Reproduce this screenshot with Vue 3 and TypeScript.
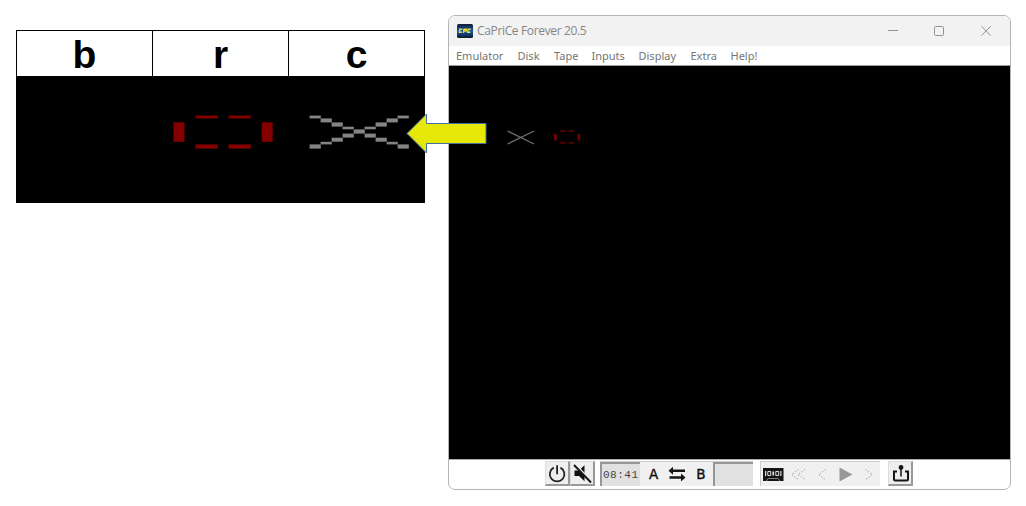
<script setup lang="ts">
const columns: string[] = ['b', 'r', 'c']
const menu: string[] = ['Emulator', 'Disk', 'Tape', 'Inputs', 'Display', 'Extra', 'Help!']

interface Block { x: number; y: number; w: number; h: number }

const redBlocks: Block[] = [
  { x: 157.5, y: 46.3, w: 11, h: 19.5 },
  { x: 245.7, y: 46.3, w: 11, h: 19.5 },
  { x: 179.5, y: 39.6, w: 22.3, h: 2.8 },
  { x: 212.5, y: 39.6, w: 22.3, h: 2.8 },
  { x: 179.5, y: 68.4, w: 22.3, h: 4.2 },
  { x: 212.5, y: 68.4, w: 22.3, h: 4.2 },
]

// Scan-line rows of the cross: distance from the centre column, top and height
const rows: [number, number, number][] = [
  [4, 39.6, 2.8], [3, 42.4, 4], [2, 46.4, 4.2], [1, 50.7, 2.6],
  [0, 53.4, 4.2], [1, 57.6, 4], [2, 61.7, 4], [3, 65.8, 2.6], [4, 68.4, 4.2],
]
const crossBlocks: Block[] = rows.flatMap(([d, y, h]) =>
  (d === 0 ? [0] : [-d, d]).map((n) => ({ x: 337.6 + n * 11, y, w: 11.2, h })),
)
</script>

<template>
  <main class="page">
    <section class="table">
      <div class="heads">
        <div v-for="c in columns" :key="c" class="head">{{ c }}</div>
      </div>
      <svg class="cells" width="409" height="127" viewBox="0 0 409 127">
        <g fill="#840000">
          <rect v-for="(b, i) in redBlocks" :key="i" :x="b.x" :y="b.y" :width="b.w" :height="b.h" />
        </g>
        <g fill="#848484">
          <rect v-for="(b, i) in crossBlocks" :key="i" :x="b.x" :y="b.y" :width="b.w" :height="b.h" />
        </g>
      </svg>
    </section>

    <section class="window">
      <header class="title">
        <svg class="logo" width="16" height="14" viewBox="0 0 16 14">
          <defs>
            <linearGradient id="sky" x1="0" y1="0" x2="0" y2="1">
              <stop offset="0" stop-color="#151c30" />
              <stop offset=".5" stop-color="#1457b8" />
              <stop offset="1" stop-color="#101828" />
            </linearGradient>
          </defs>
          <rect width="16" height="14" rx="1.5" fill="url(#sky)" />
          <path d="M5.400 5.200H2.800L2.300 8.300h2.600M6.400 9 7 5.200h2.400L9.100 7H7M13.800 5.200h-2.600l-.5 3.100h2.700" fill="none" stroke="#e6dc30" stroke-width="1.400" />
        </svg>
        <span class="name">CaPriCe Forever 20.5</span>
        <svg class="controls" width="104" height="12" viewBox="0 0 104 12" fill="none" stroke="#929292">
          <path d="M0 6.500h10" />
          <rect x="46.500" y="2.500" width="9" height="9" rx="1" />
          <path d="m93.500 2.300 9.200 9.200m0-9.200-9.200 9.200" />
        </svg>
      </header>
      <nav class="menu">
        <span v-for="m in menu" :key="m" :class="['item', m.toLowerCase().replace('!', '')]">{{ m }}</span>
      </nav>
      <svg class="screen" width="561" height="393" viewBox="0 0 561 393">
        <path d="m58.500 65 26.500 13M58.500 78 85 65" fill="none" stroke="#707070" stroke-width="1.300" />
        <path d="M105 68h2.700v6.500H105zM128.500 68h2.700v6.500h-2.700zM111 64.500h5.700v1.200H111zM119.500 64.500h5.700v1.200h-5.700zM111 76.200h5.700v1.400H111zM119.500 76.200h5.700v1.400h-5.700z" fill="#780000" />
      </svg>
      <footer class="tools">
        <div class="group">
          <div class="button">
            <svg width="22" height="22" viewBox="0 0 22 22" fill="none" stroke="#222" stroke-width="1.800">
              <path d="M7.800 5.600a7.300 7.300 0 1 0 6.600 0M11.100 3.200v9" />
            </svg>
          </div>
          <div class="button">
            <svg width="22" height="22" viewBox="0 0 22 22">
              <path d="M3.500 8.500H8l5.500-5.200v16L8 14H3.500z" fill="#101010" />
              <path d="m4.200 2.500 16.500 17" stroke="#eee" stroke-width="1.800" />
              <path d="m3 3 17 17.500" stroke="#151515" stroke-width="1.900" />
            </svg>
          </div>
        </div>
        <div class="drives">
          <div class="slot clock">08:41</div>
          <span class="drive">A</span>
          <svg class="swap" width="18" height="16" viewBox="0 0 18 16" fill="#151515">
            <path d="M.500 4.700 5 .700v2.700h12v2.600H5v2.700zM17.500 11.500 13 7.500v2.700H1.500v2.600H13v2.700z" />
          </svg>
          <span class="drive">B</span>
          <div class="slot empty"></div>
        </div>
        <div class="tape-deck">
          <svg width="119" height="24" viewBox="0 0 119 24">
            <path d="M2 6h20.500v13H2z" fill="#151515" />
            <path d="M4 9h1.200v5H4zM19.300 9h1.200v5h-1.200zM11.400 9.500h1.700v4h-1.700z" fill="#ddd" />
            <path d="M6.800 9.500H9.700v4H6.800zM14.800 9.500h2.900v4h-2.900z" fill="none" stroke="#ddd" />
            <path d="m5.500 19 1.700-2.500h10l1.800 2.500" fill="none" stroke="#aaa" stroke-width=".7" />
            <g fill="none" stroke="#b0b0b0" stroke-width="1.200" stroke-dasharray="1.200 1.800">
              <path d="m37.500 7.500-7 5 7 5M44 7.500l-7 5 7 5M64.500 7.500l-7 5 7 5M104.500 7.500l7 5-7 5" />
            </g>
            <path d="M78.500 5.500 91.500 12.500l-13 7z" fill="#979797" />
          </svg>
        </div>
        <div class="button eject">
          <svg width="22" height="22" viewBox="0 0 22 22" fill="none" stroke="#151515">
            <path d="M8 9.500H5V17q0 1.500 1.500 1.500h11q1.500 0 1.500-1.500V9.500h-3" stroke-width="2" />
            <path d="M12 14.500V6" stroke-width="1.500" />
            <circle cx="12" cy="5.500" r="2.400" fill="#151515" stroke="none" />
          </svg>
        </div>
      </footer>
    </section>

    <svg class="arrow" width="82" height="42" viewBox="0 0 82 42">
      <path d="M1 20.500 20.500 1v9.500H80v20H20.500V40z" fill="#e6e908" stroke="#41719c" />
    </svg>
  </main>
</template>

<style>
body {
  background: #fff;
}
</style>

<style scoped>
.page {
  position: relative;
  box-sizing: border-box;
  width: 1026px;
  height: 506px;
  padding: 15px 0 0 16px;
  display: flex;
  align-items: flex-start;
  gap: 23px;
  overflow: hidden;
}
.table {
  width: 409px;
  margin-top: 15px;
  background: #000;
}
.heads {
  box-sizing: border-box;
  height: 46px;
  padding: 1px;
  display: grid;
  grid-template-columns: 135px 135px 135px;
  gap: 1px;
}
.head {
  height: 45px;
  background: #fff;
  text-align: center;
  font: bold 39px/47px "Liberation Sans", Arial, sans-serif;
  color: #000;
}
.cells {
  display: block;
}
.window {
  box-sizing: border-box;
  width: 563px;
  height: 475px;
  border: 1px solid #b5b5b5;
  border-radius: 7px;
  overflow: hidden;
  background: #fff;
  font-family: "Noto Sans", "Open Sans", sans-serif;
}
.title {
  height: 30px;
  display: flex;
  align-items: center;
  background: #f2f2f2;
}
.logo {
  margin-left: 8px;
}
.name {
  margin-left: 4px;
  font: 12px/30px "Open Sans", sans-serif;
  letter-spacing: -0.35px;
  color: #858585;
}
.controls {
  margin: 0 18px 2px auto;
}
.menu {
  box-sizing: border-box;
  height: 20px;
  padding-left: 7px;
  display: flex;
  border-bottom: 1px solid #999;
  font-size: 11px;
  line-height: 19px;
  color: #757575;
}
.item {
  flex: none;
  white-space: nowrap;
}
.emulator { width: 61.5px; }
.disk { width: 36.5px; }
.tape { width: 37.5px; }
.inputs { width: 47px; }
.display { width: 52px; }
.extra { width: 40px; }
.screen {
  display: block;
  background: #000;
}
.tools {
  box-sizing: border-box;
  height: 30px;
  padding: 1px 0 0 96px;
  display: flex;
  align-items: flex-start;
  border-top: 1px solid #aaa;
}
.group {
  display: flex;
}
.button {
  box-sizing: border-box;
  width: 25px;
  height: 25px;
  background: #eee;
  border-right: 2px solid #999;
  border-bottom: 2px solid #999;
  border-top: 1px solid #ddd;
  border-left: 1px solid #ddd;
}
.button svg {
  display: block;
}
.drives {
  box-sizing: border-box;
  width: 153px;
  height: 25px;
  margin-left: 5px;
  display: flex;
  align-items: center;
  background: #f0f0f0;
  border-top: 1px solid #ccc;
}
.slot {
  box-sizing: border-box;
  flex: none;
  width: 40px;
  height: 24px;
  background: #e1e1e1;
  border-top: 2px solid #969696;
  border-left: 2px solid #969696;
}
.clock {
  font: 11px/23px "Liberation Mono", monospace;
  letter-spacing: 0.5px;
  color: #444;
  padding-left: 1px;
}
.drive {
  flex: none;
  width: 27px;
  text-align: center;
  font: 13.5px/24px "DejaVu Sans", sans-serif;
  color: #111;
  -webkit-text-stroke: 0.4px #111;
}
.swap {
  flex: none;
  margin: 0 3px 0 1px;
}
.swap + .drive {
  width: 24px;
}
.empty {
  margin-left: auto;
}
.tape-deck {
  box-sizing: border-box;
  width: 120px;
  height: 25px;
  margin-left: 7px;
  background: #f0f0f0;
  border-top: 1px solid #ccc;
  border-left: 1px solid #ccc;
}
.eject {
  margin-left: 8px;
}
.arrow {
  position: absolute;
  left: 406px;
  top: 113px;
}
</style>
